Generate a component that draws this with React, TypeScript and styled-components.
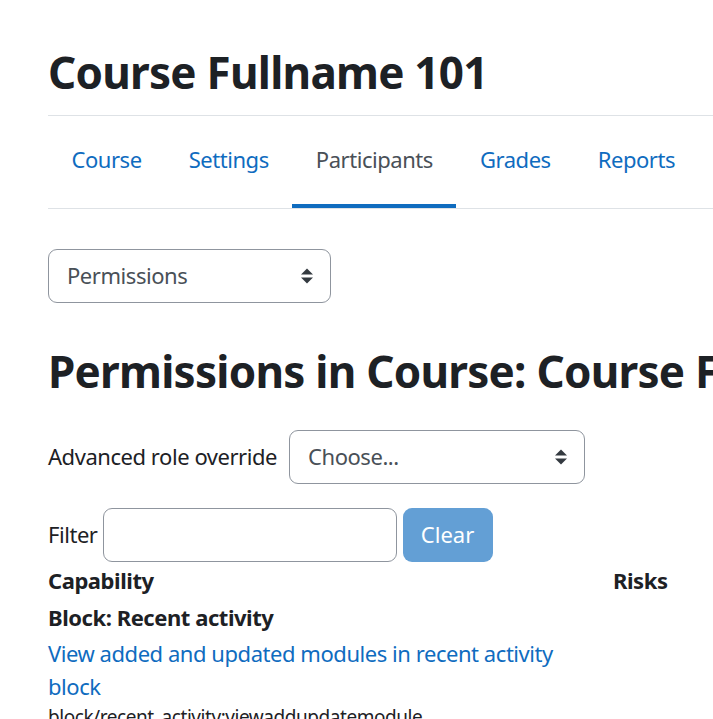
import React from "react";
import styled, { createGlobalStyle } from "styled-components";

const Global = createGlobalStyle`
  html, body { margin: 0; padding: 0; background: #fff; }
  body {
    font-family: "Noto Sans", "Open Sans", Arial, sans-serif;
    font-size: 22px;
    letter-spacing: -0.45px;
    line-height: 1.5;
    color: #1d2125;
    overflow: hidden;
  }
  * { box-sizing: border-box; }
`;

const Page = styled.div`
  padding-left: 48px;
  width: 100%;
  overflow: hidden;
`;

const PageTitle = styled.h1`
  margin: 0;
  padding-top: 46px;
  font-size: 44px;
  letter-spacing: -0.75px;
  font-weight: 700;
  line-height: 1.2;
  white-space: nowrap;
  padding-bottom: 16px;
  border-bottom: 1px solid #dee2e6;
`;

const Tabs = styled.nav`
  display: flex;
  border-bottom: 1px solid #dee2e6;
  padding-top: 26px;
`;

const Tab = styled.a<{ $active?: boolean }>`
  display: block;
  padding: 0 23.5px 28px;
  line-height: 34px;
  color: ${(p) => (p.$active ? "#495057" : "#0f6cbf")};
  text-decoration: none;
  border-bottom: 4px solid ${(p) => (p.$active ? "#0f6cbf" : "transparent")};
  white-space: nowrap;
`;

const SelectBox = styled.div<{ $width: number }>`
  display: flex;
  align-items: center;
  justify-content: space-between;
  width: ${(p) => p.$width}px;
  height: 54px;
  padding: 0 16px 0 18px;
  border: 1px solid #8f959e;
  border-radius: 9px;
  color: #495057;
  background: #fff;
`;

const Arrows = () => (
  <svg width="14" height="18" viewBox="0 0 14 18">
    <path d="M1 7.5 L7 1.5 L13 7.5 Z" fill="#343a40" />
    <path d="M1 10.5 L7 16.5 L13 10.5 Z" fill="#343a40" />
  </svg>
);

const RoleSelectRow = styled.div`
  margin-top: 40px;
`;

const Heading = styled.h2`
  margin: 0;
  margin-top: 42px;
  font-size: 44px;
  letter-spacing: -0.75px;
  font-weight: 700;
  line-height: 1.2;
  white-space: nowrap;
`;

const FormRow = styled.div<{ $gap: number; $mt: number }>`
  display: flex;
  align-items: center;
  gap: ${(p) => p.$gap}px;
  margin-top: ${(p) => p.$mt}px;
`;

const Label = styled.label`
  white-space: nowrap;
`;

const TextInput = styled.input`
  width: 294px;
  height: 54px;
  border: 1px solid #8f959e;
  border-radius: 9px;
  font: inherit;
  padding: 0 16px;
  outline: none;
`;

const ClearButton = styled.button`
  height: 54px;
  width: 90px;
  border: none;
  border-radius: 9px;
  background: #639fd5;
  color: #fff;
  font: inherit;
  margin-left: 1px;
`;

const TableHead = styled.div`
  display: grid;
  grid-template-columns: 565px auto;
  font-weight: 700;
  margin-top: 2px;
`;

const GroupTitle = styled.div`
  font-weight: 700;
  margin-top: 4px;
`;

const CapLink = styled.a`
  display: block;
  color: #0f6cbf;
  text-decoration: none;
  width: 530px;
  margin-top: 3px;
  line-height: 33px;
`;

const CapName = styled.div`
  font-size: 19px;
  color: #1d2125;
  line-height: 1.5;
`;

export default function App() {
  return (
    <>
      <Global />
      <Page>
        <PageTitle>Course Fullname 101</PageTitle>
        <Tabs>
          <Tab href="#">Course</Tab>
          <Tab href="#">Settings</Tab>
          <Tab href="#" $active>Participants</Tab>
          <Tab href="#">Grades</Tab>
          <Tab href="#">Reports</Tab>
        </Tabs>
        <RoleSelectRow>
          <SelectBox $width={283}>
            <span>Permissions</span>
            <Arrows />
          </SelectBox>
        </RoleSelectRow>
        <Heading>Permissions in Course: Course Fullname 101</Heading>
        <FormRow $gap={12} $mt={32}>
          <Label>Advanced role override</Label>
          <SelectBox $width={296}>
            <span>Choose...</span>
            <Arrows />
          </SelectBox>
        </FormRow>
        <FormRow $gap={5} $mt={24}>
          <Label>Filter</Label>
          <TextInput type="text" />
          <ClearButton disabled>Clear</ClearButton>
        </FormRow>
        <TableHead>
          <span>Capability</span>
          <span>Risks</span>
        </TableHead>
        <GroupTitle>Block: Recent activity</GroupTitle>
        <CapLink href="#">View added and updated modules in recent activity block</CapLink>
        <CapName>block/recent_activity:viewaddupdatemodule</CapName>
      </Page>
    </>
  );
}
